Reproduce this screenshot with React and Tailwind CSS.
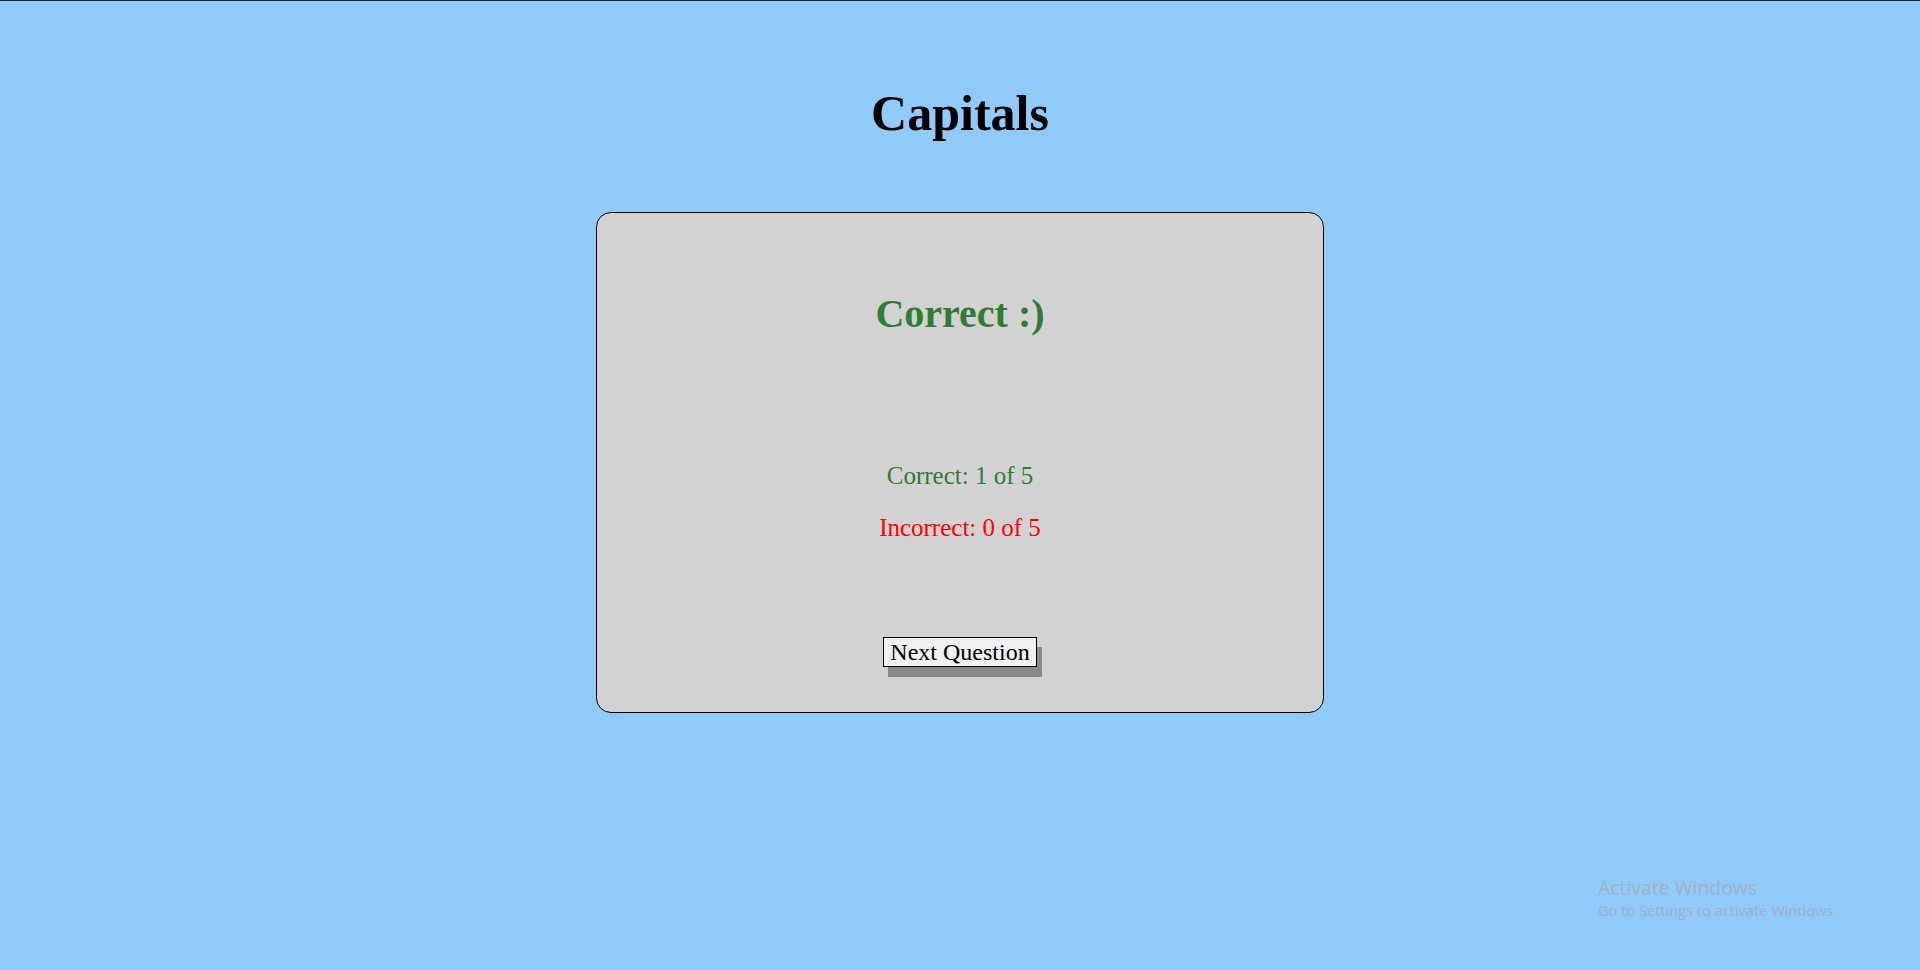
import React from 'react';

export default function App() {
    const correct = 1;
    const incorrect = 0;
    const total = 5;

    return (
        <div className="relative min-h-[970px] bg-[#90caf9] border-t border-[#1f2a3a] font-['Liberation_Serif','Times_New_Roman',serif] text-black overflow-hidden">
            <div className="flex flex-col items-center pt-[84px]">
                <h1 className="text-[50px] leading-[57px] font-bold">Capitals</h1>

                <div className="mt-[70px] w-[728px] h-[501px] bg-[#d3d2d3] border border-black rounded-[15px] flex flex-col items-center pt-[78px]">
                    <h2 className="text-[40px] leading-[46px] font-bold text-[#2e7d32]">Correct :)</h2>

                    <p className="mt-[124px] text-[25px] leading-[29px] text-[#2e7d32]">Correct: {correct} of {total}</p>
                    <p className="mt-[23px] text-[25px] leading-[29px] text-[#ff0000]">Incorrect: {incorrect} of {total}</p>

                    <button className="mt-[95px] px-[6px] py-0 text-[24px] leading-[28px] bg-[#f0f0f0] border border-black shadow-[5px_10px_0_#8a8a8a] cursor-pointer">
                        Next Question
                    </button>
                </div>
            </div>

            {/* windows watermark */}
            <div className="absolute left-[1598px] top-[874px] font-['Open_Sans','Noto_Sans',sans-serif] text-[#9fb1c6] pointer-events-none">
                <p className="text-[19.4px] leading-[25px]">Activate Windows</p>
                <p className="text-[14.6px] leading-[20px]">Go to Settings to activate Windows.</p>
            </div>
        </div>
    );
}
